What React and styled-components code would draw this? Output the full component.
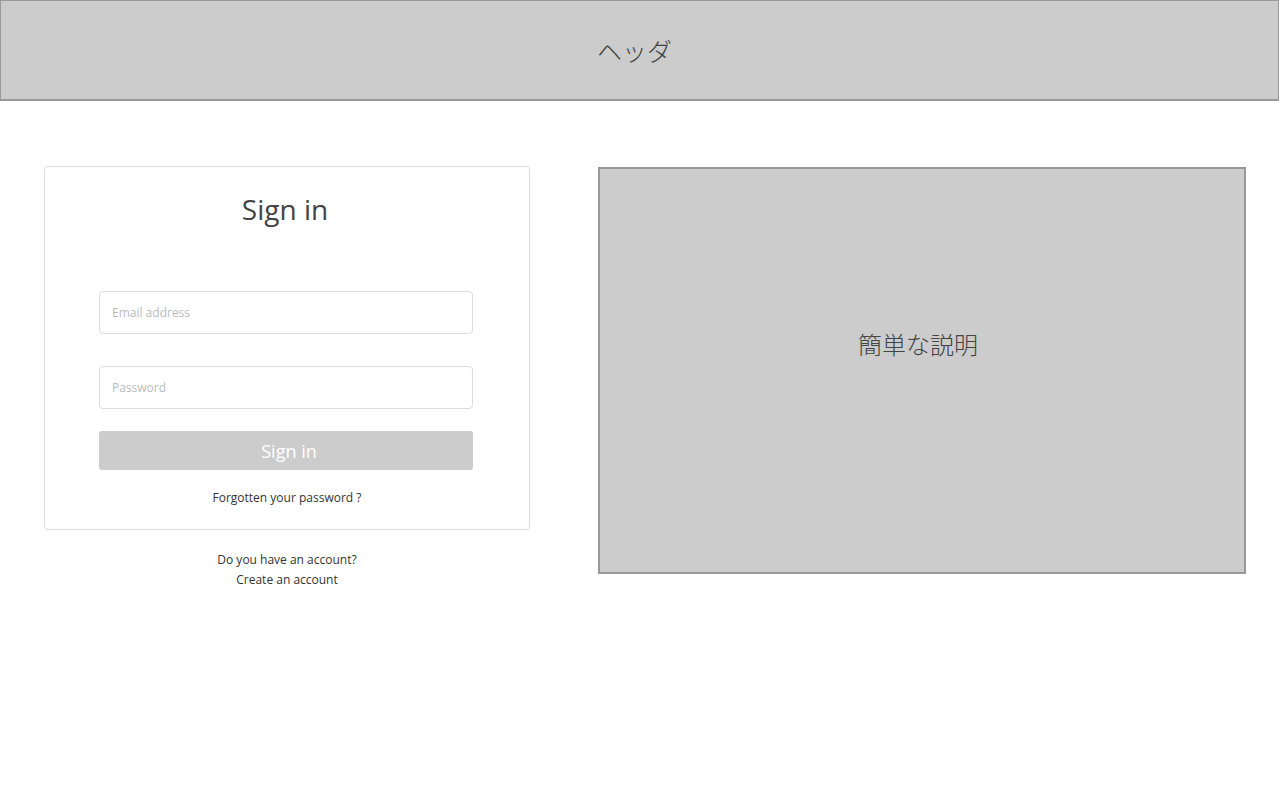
import React from 'react';
import styled, { createGlobalStyle } from 'styled-components';

const GlobalStyle = createGlobalStyle`
    body {
        margin: 0;
        background: #fff;
        font-family: "Open Sans", "Noto Sans CJK JP", sans-serif;
    }
`;

//Top header bar
const Header = styled.header`
    box-sizing: border-box;
    width: 1279px;
    height: 101px;
    background: #cccccc;
    border: 1px solid #999;
    border-bottom-width: 2px;
    display: flex;
    align-items: center;
    justify-content: center;
    padding-right: 10px;
    font-family: "Noto Sans CJK JP", sans-serif;
    font-size: 25px;
    font-weight: 300;
    color: #444;
`;

const Main = styled.main`
    display: flex;
    align-items: flex-start;
    gap: 68px;
    padding: 65px 0 0 44px;
`;

//Left column with the sign in form
const FormColumn = styled.div`
    width: 486px;
    display: flex;
    flex-direction: column;
    align-items: center;
`;

const Card = styled.form`
    box-sizing: border-box;
    width: 486px;
    height: 364px;
    border: 1px solid #ddd;
    border-radius: 4px;
    display: flex;
    flex-direction: column;
    align-items: center;
    padding-top: 21px;
`;

const Title = styled.h1`
    margin: 0 4px 61px 0;
    font-size: 28px;
    font-weight: 400;
    line-height: 42px;
    color: #444;
`;

const Field = styled.input`
    box-sizing: border-box;
    width: 374px;
    height: 43px;
    margin: 0 2px ${p => p.gap}px 0;
    padding: 0 12px;
    border: 1px solid #ddd;
    border-radius: 4px;
    font-family: "Open Sans", sans-serif;
    font-size: 12px;
    color: #444;
    outline: none;
    &::placeholder {
        color: #bbb;
    }
`;

const SubmitButton = styled.button`
    width: 374px;
    height: 39px;
    margin-right: 2px;
    padding: 0 0 0 6px;
    border: none;
    border-radius: 3px;
    background: #cccccc;
    color: #fff;
    font-family: "Open Sans", sans-serif;
    font-size: 18px;
    cursor: pointer;
`;

const SmallLink = styled.a`
    display: block;
    font-size: 12px;
    line-height: 20px;
    color: #333;
    text-decoration: none;
    margin-top: ${p => p.top || 0}px;
`;

//Right side description panel
const Description = styled.section`
    box-sizing: border-box;
    width: 648px;
    height: 407px;
    margin-top: 1px;
    background: #cccccc;
    border: 2px solid #999;
    display: flex;
    align-items: center;
    justify-content: center;
    padding: 0 8px 54px 0;
    font-family: "Noto Sans CJK JP", sans-serif;
    font-size: 24px;
    font-weight: 300;
    color: #444;
`;

export default function App() {
    return (
        <>
            <GlobalStyle />
            <Header>ヘッダ</Header>
            <Main>
                <FormColumn>
                    <Card>
                        <Title>Sign in</Title>
                        <Field type="email" placeholder="Email address" gap={32} />
                        <Field type="password" placeholder="Password" gap={22} />
                        <SubmitButton type="button">Sign in</SubmitButton>
                        <SmallLink href="#" top={18}>Forgotten your password ?</SmallLink>
                    </Card>
                    <SmallLink href="#" top={20}>Do you have an account?</SmallLink>
                    <SmallLink href="#">Create an account</SmallLink>
                </FormColumn>
                <Description>簡単な説明</Description>
            </Main>
        </>
    );
}
